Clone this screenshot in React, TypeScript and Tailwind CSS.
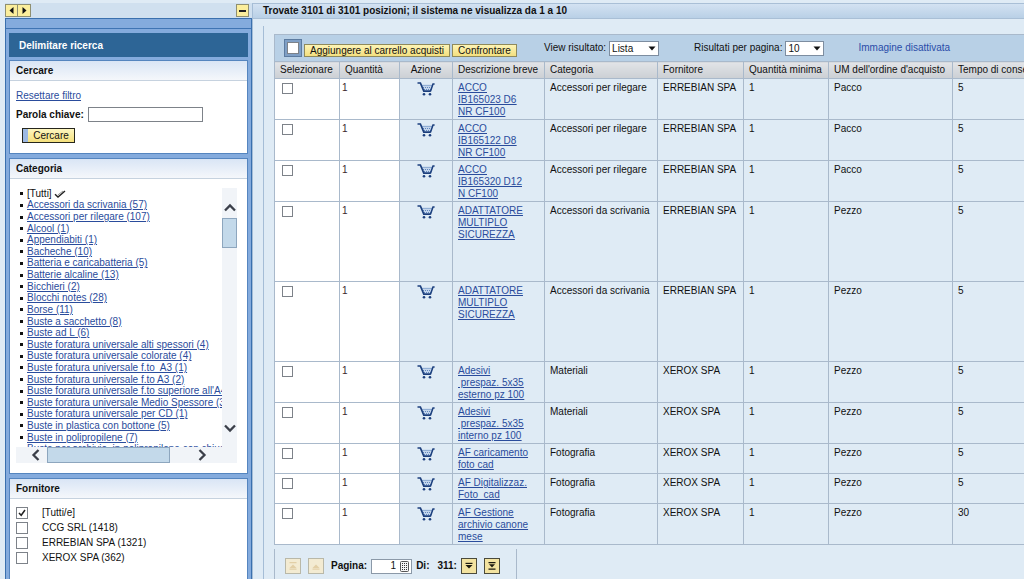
import React from 'react';

const categories = [
  'Accessori da scrivania (57)',
  'Accessori per rilegare (107)',
  'Alcool (1)',
  'Appendiabiti (1)',
  'Bacheche (10)',
  'Batteria e caricabatteria (5)',
  'Batterie alcaline (13)',
  'Bicchieri (2)',
  'Blocchi notes (28)',
  'Borse (11)',
  'Buste a sacchetto (8)',
  'Buste ad L (6)',
  'Buste foratura universale alti spessori (4)',
  'Buste foratura universale colorate (4)',
  'Buste foratura universale f.to\u00a0 A3 (1)',
  'Buste foratura universale f.to A3 (2)',
  "Buste foratura universale f.to superiore all'A4 (1)",
  'Buste foratura universale Medio Spessore (3)',
  'Buste foratura universale per CD (1)',
  'Buste in plastica con bottone (5)',
  'Buste in polipropilene (7)',
  'Buste per archivio\u00a0 in polipropilene con chiusura (2)',
];

const suppliers = ['[Tutti/e]', 'CCG SRL (1418)', 'ERREBIAN SPA (1321)', 'XEROX SPA (362)'];

type Row = { lines: string[]; cat: string; sup: string; um: string; days: string; height: string };

const H3 = 'h-[41px]';
const rows: Row[] = [
  { lines: ['ACCO', 'IB165023 D6', 'NR CF100'], cat: 'Accessori per rilegare', sup: 'ERREBIAN SPA', um: 'Pacco', days: '5', height: H3 },
  { lines: ['ACCO', 'IB165122 D8', 'NR CF100'], cat: 'Accessori per rilegare', sup: 'ERREBIAN SPA', um: 'Pacco', days: '5', height: H3 },
  { lines: ['ACCO', 'IB165320 D12', 'N CF100'], cat: 'Accessori per rilegare', sup: 'ERREBIAN SPA', um: 'Pacco', days: '5', height: H3 },
  { lines: ['ADATTATORE', 'MULTIPLO', 'SICUREZZA'], cat: 'Accessori da scrivania', sup: 'ERREBIAN SPA', um: 'Pezzo', days: '5', height: 'h-20' },
  { lines: ['ADATTATORE', 'MULTIPLO', 'SICUREZZA'], cat: 'Accessori da scrivania', sup: 'ERREBIAN SPA', um: 'Pezzo', days: '5', height: 'h-20' },
  { lines: ['Adesivi', '\u00a0prespaz. 5x35', 'esterno pz 100'], cat: 'Materiali', sup: 'XEROX SPA', um: 'Pezzo', days: '5', height: H3 },
  { lines: ['Adesivi', '\u00a0prespaz. 5x35', 'interno pz 100'], cat: 'Materiali', sup: 'XEROX SPA', um: 'Pezzo', days: '5', height: H3 },
  { lines: ['AF caricamento', 'foto cad'], cat: 'Fotografia', sup: 'XEROX SPA', um: 'Pezzo', days: '5', height: 'h-[30px]' },
  { lines: ['AF Digitalizzaz.', 'Foto\u00a0 cad'], cat: 'Fotografia', sup: 'XEROX SPA', um: 'Pezzo', days: '5', height: 'h-[30px]' },
  { lines: ['AF Gestione', 'archivio canone', 'mese'], cat: 'Fotografia', sup: 'XEROX SPA', um: 'Pezzo', days: '30', height: H3 },
];

const columns = [
  { label: 'Selezionare', width: 'w-[65px]' },
  { label: 'Quantità', width: 'w-[60px]' },
  { label: 'Azione', width: 'w-[53px]' },
  { label: 'Descrizione breve', width: 'w-[92px]' },
  { label: 'Categoria', width: 'w-[113px]' },
  { label: 'Fornitore', width: 'w-[86px]' },
  { label: 'Quantità minima', width: 'w-[85px]' },
  { label: "UM dell'ordine d'acquisto", width: 'w-[124px]' },
  { label: 'Tempo di consegna', width: 'w-[130px]' },
];

const link = 'text-[#2a4c9c] underline';
const box = 'block appearance-none border border-[#7d8289] bg-white shrink-0';
const cell = 'border border-[#a9b9cb] align-top pt-[3px] pb-0';

function Cart() {
  return (
    <svg width="18" height="14" viewBox="0 0 18 14" aria-hidden="true" className="block">
      <path d="M5 2.5H15.6L13.6 8.5H7Z" fill="#c3d5ec" />
      <path d="M5.5 3.5H15M6 5.5H14.5M7 7.5H14" stroke="#5f86bd" strokeWidth="1" strokeDasharray="1 1" />
      <path d="M0.5 1H3.4L6.8 9.2H13.8" fill="none" stroke="#1c3f7d" strokeWidth="1.7" />
      <path d="M17.6 2H16L13.5 9.2" fill="none" stroke="#1c3f7d" strokeWidth="1.5" />
      <circle cx="7" cy="12.2" r="1.3" fill="#1c3f7d" />
      <circle cx="13" cy="12.2" r="1.3" fill="#1c3f7d" />
    </svg>
  );
}

function Chevron({ d }: { d: string }) {
  return (
    <svg width="12" height="12" viewBox="0 0 12 12" aria-hidden="true" className="block">
      <path d={d} fill="none" stroke="#3b3f49" strokeWidth="2.3" />
    </svg>
  );
}

function PageButton({ label, disabled, up, double }: { label: string; disabled?: boolean; up?: boolean; double?: boolean }) {
  return (
    <button
      aria-label={label}
      disabled={disabled}
      className={
        disabled
          ? 'flex size-4 items-center justify-center border border-[#b9b8a8] bg-[#f3ebd2] text-[#e2cfa6]'
          : 'flex size-4 items-center justify-center border border-[#4a4a3c] bg-[#f3e3a0] text-[#1c1a10]'
      }
    >
      <svg width="10" height="10" viewBox="0 0 10 10" fill="currentColor" aria-hidden="true">
        {up ? (
          <>
            <path d="M5 3.5L8.5 7H1.5Z" />
            <path d={double ? 'M1.5 1h7v1.3h-7zM1.5 7.5h7v1.3h-7z' : 'M1.5 7.5h7v1.2h-7z'} />
          </>
        ) : (
          <>
            <path d={double ? 'M2 3.3H8L5 6.5Z' : 'M1.5 4H8.5L5 7.5Z'} />
            <path d={double ? 'M1.5 1h7v1.3h-7zM1.5 7.5h7v1.3h-7z' : 'M1.5 1.8h7v1.2h-7z'} />
          </>
        )}
      </svg>
    </button>
  );
}

function Panel({ title, className, children }: { title: string; className: string; children: React.ReactNode }) {
  return (
    <section className={`border border-[#5585bf] bg-white ${className}`}>
      <h2 className="h-5 border-b border-[#c6d2df] bg-linear-to-b from-[#d9e5f5] to-[#f5f7fb] px-[6px] font-bold leading-[19px]">
        {title}
      </h2>
      {children}
    </section>
  );
}

function Dropdown({ id, label, options, width }: { id: string; label: string; options: string[]; width: string }) {
  return (
    <div className="flex items-center gap-[3px]">
      <label htmlFor={id} className="whitespace-nowrap">{label}</label>
      <div className={`grid items-center ${width}`}>
        <select
          id={id}
          className="col-start-1 row-start-1 h-[15px] w-full appearance-none border border-[#7d8da0] bg-white pl-[2px] leading-[13px]"
        >
          {options.map((o) => <option key={o}>{o}</option>)}
        </select>
        <svg width="8" height="5" viewBox="0 0 8 5" aria-hidden="true" className="pointer-events-none col-start-1 row-start-1 mr-[3px] justify-self-end">
          <path d="M0.5 0.5H7.5L4 4.5Z" fill="#111" />
        </svg>
      </div>
    </div>
  );
}

function Sidebar() {
  return (
    <aside className="flex w-[247px] shrink-0 flex-col">
      <div className="flex h-[15px] items-center justify-between bg-[#d0e0ef] pr-[3px]">
        <div className="flex">
          <button aria-label="Indietro" className="flex h-[13px] w-[13px] items-center justify-center border border-[#8f8f70] bg-[#fbee9c]">
            <svg width="5" height="7" viewBox="0 0 5 7" aria-hidden="true"><path d="M4.5 0V7L0.5 3.5Z" fill="#111" /></svg>
          </button>
          <button aria-label="Avanti" className="flex h-[13px] w-[13px] items-center justify-center border border-l-0 border-[#8f8f70] bg-[#fbee9c]">
            <svg width="5" height="7" viewBox="0 0 5 7" aria-hidden="true"><path d="M0.5 0V7L4.5 3.5Z" fill="#111" /></svg>
          </button>
        </div>
        <button aria-label="Riduci" className="flex h-[13px] w-[13px] items-center justify-center border border-[#8f8f70] bg-[#fbee9c]">
          <span className="block h-[2px] w-[7px] bg-[#222]" />
        </button>
      </div>
      <div className="flex flex-1 flex-col border-x border-t border-[#3a70ae] bg-[#84abdd]">
        <div className="h-[10px] shrink-0 border-b border-[#3f74b3]" />
        <div className="flex flex-1 flex-col px-[3px] pt-1">
          <h1 className="h-6 bg-[#2d6596] px-[10px] font-bold leading-[26px] text-white">Delimitare ricerca</h1>
          <Panel title="Cercare" className="mt-[3px]">
            <div className="flex flex-col items-start px-[6px] pt-[9px] pb-[10px]">
              <a href="#reset" className={link}>Resettare filtro</a>
              <div className="mt-[5px] flex items-center gap-1">
                <label htmlFor="kw" className="font-bold">Parola chiave:</label>
                <input id="kw" type="text" className="h-[15px] w-[115px] border border-[#7d8289] bg-white px-1" />
              </div>
              <button className="mt-[6px] ml-[6px] flex h-[15px] w-[53px] items-center border border-[#26261c] bg-linear-to-b from-[#fdf6bf] to-[#f5e07b]">
                <span className="h-full w-[5px] bg-[#9db9e2]" />
                <span className="flex-1 leading-[12px]">Cercare</span>
              </button>
            </div>
          </Panel>
          <Panel title="Categoria" className="mt-1">
            <div className="mt-[9px] mr-[10px] mb-[10px] ml-[6px]">
              <div className="flex">
                <div className="h-[259px] min-w-0 flex-1 overflow-hidden">
                  <ul className="grid h-[267px] auto-rows-fr whitespace-nowrap">
                    <li className="flex items-center gap-1 pl-1">
                      <span className="size-[3px] shrink-0 bg-[#111]" />
                      <span className="flex items-center gap-[2px]">
                        [Tutti]
                        <svg width="12" height="8" viewBox="0 0 12 8" aria-hidden="true">
                          <path d="M1 4.2L4 7L11 1" fill="none" stroke="#222" strokeWidth="1.4" />
                          <path d="M3.8 5L9 1" stroke="#777" strokeWidth="0.8" />
                        </svg>
                      </span>
                    </li>
                    {categories.map((c) => (
                      <li key={c} className="flex items-center gap-1 pl-1">
                        <span className="size-[3px] shrink-0 bg-[#111]" />
                        <a href="#categoria" className={link}>{c}</a>
                      </li>
                    ))}
                  </ul>
                </div>
                <div className="flex w-[15px] shrink-0 flex-col items-center bg-[#f1f4f8] pt-[14px] pb-[13px]">
                  <button aria-label="Scorri su"><Chevron d="M1 8.5L6 3.5L11 8.5" /></button>
                  <div className="mt-1 h-[30px] w-full border border-[#8da6be] bg-[#c3d9ea]" />
                  <button aria-label="Scorri giù" className="mt-auto"><Chevron d="M1 3.5L6 8.5L11 3.5" /></button>
                </div>
              </div>
              <div className="flex h-4 items-center bg-[#f1f4f8] pr-[29px] pl-[14px]">
                <button aria-label="Scorri a sinistra"><Chevron d="M8.5 1L3.5 6L8.5 11" /></button>
                <div className="ml-[5px] h-full w-[123px] border border-[#8da6be] bg-[#c3d9ea]" />
                <button aria-label="Scorri a destra" className="ml-auto"><Chevron d="M3.5 1L8.5 6L3.5 11" /></button>
              </div>
            </div>
          </Panel>
          <Panel title="Fornitore" className="mt-1 flex-1 border-b-0">
            <div className="flex flex-col gap-[3px] px-[6px] pt-2">
              {suppliers.map((s, i) => (
                <label key={s} className="flex items-center gap-[14px]">
                  <span className="grid items-center justify-items-center">
                    <input type="checkbox" defaultChecked={i === 0} className={`${box} peer col-start-1 row-start-1 size-3`} />
                    <svg width="8" height="8" viewBox="0 0 8 8" aria-hidden="true" className="pointer-events-none invisible col-start-1 row-start-1 peer-checked:visible">
                      <path d="M1 4L3.2 6.3L7 1" fill="none" stroke="#222" strokeWidth="1.5" />
                    </svg>
                  </span>
                  {s}
                </label>
              ))}
            </div>
          </Panel>
        </div>
      </div>
    </aside>
  );
}

function Results() {
  return (
    <main className="min-w-0 flex-1 overflow-hidden border-l border-[#a5bdd6]">
      <h2 className="h-4 border-y border-[#a9bfd6] bg-linear-to-b from-[#d3e2f2] to-[#b9d0e6] pl-[10px] font-bold leading-[14px] whitespace-nowrap">
        Trovate 3101 di 3101 posizioni; il sistema ne visualizza da 1 a 10
      </h2>
      <div className="mt-[7px] ml-[10px] border-l border-[#a5bdd6] pt-2 pl-[10px]">
        <div className="flex h-[27px] items-center border-t border-l border-[#a9b9cb] bg-[#b8d0e6] pl-[9px]">
          <div className="flex size-[18px] items-center justify-center border border-[#5c7ba0] bg-[#7f9fc5]">
            <input type="checkbox" aria-label="Seleziona tutto" className={`${box} size-3`} />
          </div>
          <div className="ml-[2px] flex gap-[2px] pt-1">
            <button className="h-[13px] w-[146px] border border-[#8f8a5c] bg-linear-to-b from-[#fdf4b5] to-[#f3df7e] leading-[11px] whitespace-nowrap">Aggiungere al carrello acquisti</button>
            <button className="h-[13px] w-[65px] border border-[#8f8a5c] bg-linear-to-b from-[#fdf4b5] to-[#f3df7e] leading-[11px]">Confrontare</button>
          </div>
          <div className="ml-[27px]"><Dropdown id="view" label="View risultato:" options={['Lista', 'Griglia']} width="w-[50px]" /></div>
          <div className="ml-[35px]"><Dropdown id="pp" label="Risultati per pagina:" options={['10', '20', '50']} width="w-[39px]" /></div>
          <a href="#immagine" className="ml-[34px] whitespace-nowrap text-[#2a4ca8]">Immagine disattivata</a>
        </div>
        <table className="w-[808px] table-fixed border-collapse">
          <thead>
            <tr className="h-[17px]">
              {columns.map((c, i) => (
                <th
                  key={c.label}
                  scope="col"
                  className={`${c.width} border border-[#a9b9cb] bg-linear-to-b from-[#e2e4e7] to-[#cbcfd4] font-normal whitespace-nowrap ${i === 2 ? 'text-center' : 'pl-[5px] text-left'}`}
                >
                  {c.label}
                </th>
              ))}
            </tr>
          </thead>
          <tbody>
            {rows.map((r, i) => (
              <tr key={i} className={r.height}>
                <td className={`${cell} bg-white pl-[7px]`}>
                  <input type="checkbox" aria-label={`Seleziona ${r.lines.join(' ')}`} className={`${box} mt-px size-[11px]`} />
                </td>
                <td className={`${cell} bg-white pl-[2px] text-[#3c1f2c]`}>1</td>
                <td className={cell}>
                  <button aria-label="Aggiungi al carrello" className="mx-auto block"><Cart /></button>
                </td>
                <td className={`${cell} pl-[5px] whitespace-nowrap`}>
                  <a href="#articolo" className={link}>
                    {r.lines.map((l) => (
                      <span key={l} className="block underline">{l}</span>
                    ))}
                  </a>
                </td>
                <td className={`${cell} pl-[5px] whitespace-nowrap`}>{r.cat}</td>
                <td className={`${cell} pl-[5px] whitespace-nowrap`}>{r.sup}</td>
                <td className={`${cell} pl-[5px]`}>1</td>
                <td className={`${cell} pl-[5px]`}>{r.um}</td>
                <td className={`${cell} pl-[5px]`}>{r.days}</td>
              </tr>
            ))}
          </tbody>
        </table>
        <div className="mt-1 flex h-[30px] w-[243px] items-center border-x border-[#a9b9cb] pt-1 pl-[10px] font-bold">
          <PageButton label="Prima pagina" disabled up double />
          <div className="ml-[7px]"><PageButton label="Pagina precedente" disabled up /></div>
          <label htmlFor="page" className="ml-[7px]">Pagina:</label>
          <div className="ml-1 flex h-[15px] w-[41px] items-center border border-[#8b99a8] bg-white pr-[2px]">
            <input id="page" type="text" defaultValue="1" className="w-full min-w-0 pr-1 text-right font-normal outline-none" />
            <svg width="9" height="11" viewBox="0 0 9 11" aria-hidden="true" className="shrink-0">
              <rect x="0.5" y="0.5" width="8" height="10" rx="1" fill="#f4f4f4" stroke="#555" />
              <path d="M2 2.5H7.5M2 4.5H7.5M2 6.5H7.5M2 8.5H7.5" stroke="#333" strokeDasharray="1 1" />
            </svg>
          </div>
          <span className="ml-1">Di:</span>
          <span className="ml-2">311:</span>
          <div className="ml-1"><PageButton label="Pagina successiva" /></div>
          <div className="ml-[7px]"><PageButton label="Ultima pagina" double /></div>
        </div>
      </div>
    </main>
  );
}

export default function App() {
  return (
    <div className="flex min-h-screen overflow-hidden bg-[#dfebf5] pt-[3px] pl-[5px] font-['Liberation_Sans',Arial,sans-serif] text-[10px] leading-[12px] text-[#111]">
      <Sidebar />
      <Results />
    </div>
  );
}
